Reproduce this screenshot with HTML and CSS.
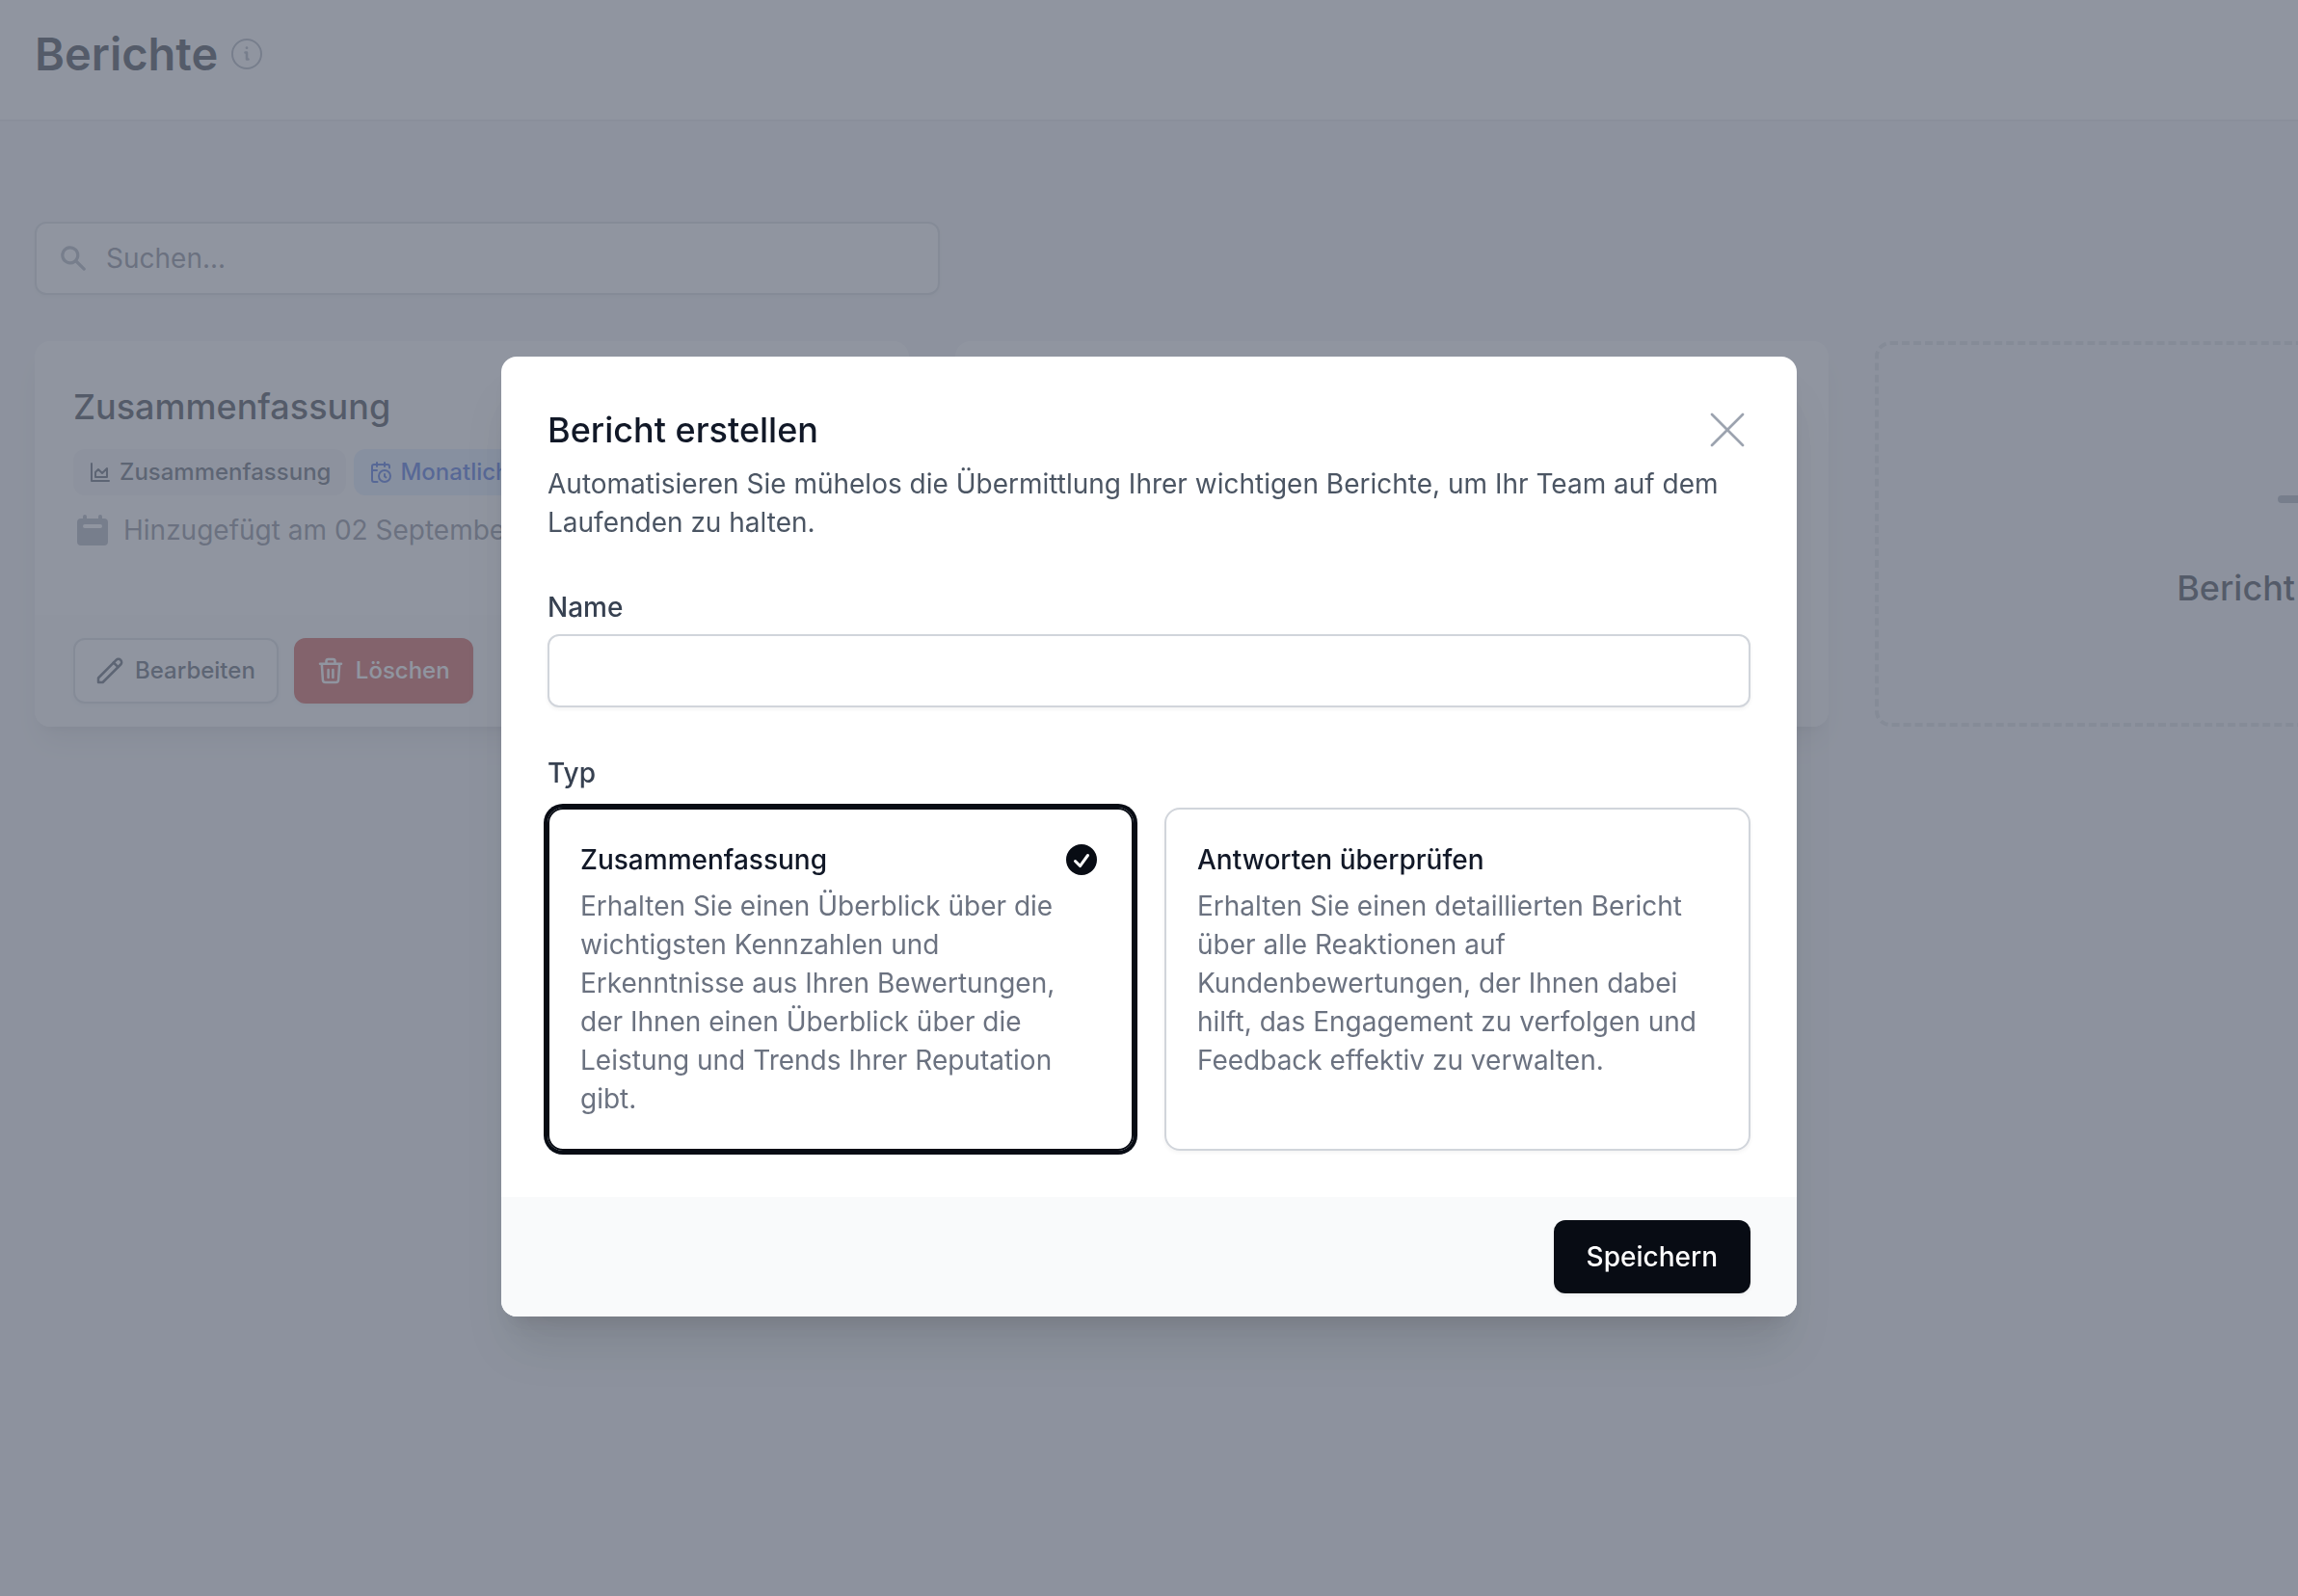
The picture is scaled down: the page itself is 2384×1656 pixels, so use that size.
FILE: index.html
```html
<!DOCTYPE html>
<html lang="de">
<head>
  <meta charset="UTF-8" />
  <meta name="viewport" content="width=device-width, initial-scale=1.0" />
  <title>Berichte</title>
  <link rel="stylesheet" href="styles.css">
</head>
<body>
  <header class="page-header">
    <h1>Berichte</h1>
    <svg class="info-icon" viewBox="0 0 32 32" fill="none" stroke="currentColor" stroke-width="2">
      <circle cx="16" cy="16" r="15" />
      <path d="M14.5 14.5H16v7h1.500" stroke-width="2.600" stroke-linecap="round" stroke-linejoin="round" />
      <circle cx="16" cy="9.700" r="1.400" fill="currentColor" stroke="none" />
    </svg>
  </header>

  <main class="content">
    <div class="search">
      <svg class="search-icon" viewBox="0 0 20 20" fill="currentColor">
        <path fill-rule="evenodd" clip-rule="evenodd" d="M8 4a4 4 0 100 8 4 4 0 000-8zM2 8a6 6 0 1110.89 3.476l4.817 4.817a1 1 0 01-1.414 1.414l-4.816-4.816A6 6 0 012 8z" />
      </svg>
      <input type="search" class="search-input" placeholder="Suchen..." aria-label="Suchen" />
    </div>

    <div class="report-grid">
      <article class="report-card">
        <div class="report-body">
          <h2>Zusammenfassung</h2>
          <div class="badges">
            <span class="badge">
              <svg class="badge-icon" viewBox="0 0 24 24">
                <path d="M3 3v18h18" />
                <path d="M7 12v5h12V8l-5 5-4-4Z" />
              </svg>
              Zusammenfassung
            </span>
            <span class="badge badge-blue">
              <svg class="badge-icon" viewBox="0 0 24 24">
                <path d="M21 7.5V6a2 2 0 0 0-2-2H5a2 2 0 0 0-2 2v14a2 2 0 0 0 2 2h3.5" />
                <path d="M16 2v4M8 2v4M3 10h5M17.5 17.5 16 16.3V14" />
                <circle cx="16" cy="16" r="6" />
              </svg>
              Monatlich
            </span>
          </div>
          <p class="report-date">
            <svg class="date-icon" viewBox="0 0 20 20" fill="currentColor">
              <path fill-rule="evenodd" clip-rule="evenodd" d="M6 2a1 1 0 00-1 1v1H4a2 2 0 00-2 2v10a2 2 0 002 2h12a2 2 0 002-2V6a2 2 0 00-2-2h-1V3a1 1 0 10-2 0v1H7V3a1 1 0 00-1-1zm0 5a1 1 0 000 2h8a1 1 0 100-2H6z" />
            </svg>
            Hinzugefügt am 02 September
          </p>
        </div>
        <div class="report-footer">
          <button type="button" class="btn btn-edit">
            <svg class="btn-icon" viewBox="0 0 28 28">
              <path d="M2 26v-4.500L20.500 2.800a3.300 3.300 0 0 1 4.700 4.700L6.600 26Z" />
              <path d="m17.800 5.500 4.700 4.700" />
            </svg>
            Bearbeiten
          </button>
          <button type="button" class="btn btn-delete">
            <svg class="btn-icon" viewBox="0 0 28 28">
              <path d="M3 6.700h22M4.800 6.700 5.900 23.500a2.600 2.600 0 0 0 2.600 2.500h11a2.600 2.600 0 0 0 2.600-2.500L23.200 6.700M9.500 6.700V4a2 2 0 0 1 2-2h5a2 2 0 0 1 2 2v2.700M11.600 13v8M16.400 13v8" />
            </svg>
            Löschen
          </button>
        </div>
      </article>

      <article class="report-card">
        <div class="report-body"></div>
        <div class="report-footer"></div>
      </article>

      <button type="button" class="new-report">
        <svg class="plus-icon" viewBox="0 0 24 24">
          <path d="M12 4v16m8-8H4" />
        </svg>
        Bericht erstellen
      </button>
    </div>
  </main>

  <!-- Modal -->
  <div class="overlay">
    <form class="modal" role="dialog" aria-modal="true" aria-labelledby="modal-title">
      <div class="modal-body">
        <div class="modal-head">
          <div class="modal-title-row">
            <h2 id="modal-title">Bericht erstellen</h2>
            <button type="button" class="close-btn" aria-label="Schließen">
              <svg viewBox="3 3 18 18">
                <path d="M6 18L18 6M6 6l12 12" />
              </svg>
            </button>
          </div>
          <p>Automatisieren Sie mühelos die Übermittlung Ihrer wichtigen Berichte, um Ihr Team auf dem Laufenden zu halten.</p>
        </div>

        <div class="field">
          <label class="field-label" for="report-name">Name</label>
          <input type="text" id="report-name" class="text-input" />
        </div>

        <fieldset class="field">
          <legend class="field-label">Typ</legend>
          <div class="type-options">
            <label class="type-option">
              <input type="radio" name="type" value="summary" checked />
              <span class="type-text">
                <span class="type-title">Zusammenfassung</span>
                <span class="type-desc">Erhalten Sie einen Überblick über die wichtigsten Kennzahlen und Erkenntnisse aus Ihren Bewertungen, der Ihnen einen Überblick über die Leistung und Trends Ihrer Reputation gibt.</span>
              </span>
              <svg class="check-icon" viewBox="0 0 20 20" fill="currentColor">
                <path fill-rule="evenodd" clip-rule="evenodd" d="M10 18a8 8 0 100-16 8 8 0 000 16zm3.857-9.809a.75.75 0 00-1.214-.882l-3.483 4.79-1.88-1.88a.75.75 0 10-1.06 1.061l2.5 2.5a.75.75 0 001.137-.089l4-5.5z" />
              </svg>
            </label>
            <label class="type-option">
              <input type="radio" name="type" value="responses" />
              <span class="type-text">
                <span class="type-title">Antworten überprüfen</span>
                <span class="type-desc">Erhalten Sie einen detaillierten Bericht über alle Reaktionen auf Kundenbewertungen, der Ihnen dabei hilft, das Engagement zu verfolgen und Feedback effektiv zu verwalten.</span>
              </span>
            </label>
          </div>
        </fieldset>
      </div>
      <div class="modal-footer">
        <button type="submit" class="save-btn">Speichern</button>
      </div>
    </form>
  </div>
</body>
</html>
```

FILE: styles.css
```css
* {
  box-sizing: border-box;
  margin: 0;
  padding: 0;
}
body {
  min-height: 100vh;
  overflow: hidden;
  background-color: #f3f4f6;
  color: #111827;
  font-family: Inter, "Liberation Sans", sans-serif;
  font-size: 28px;
  line-height: 40px;
}
button,
input {
  font: inherit;
}
button {
  cursor: pointer;
}
svg {
  display: block;
  flex-shrink: 0;
}

/* Header */
.page-header {
  display: flex;
  align-items: center;
  gap: 14px;
  padding: 24px 36px 36px;
  background-color: white;
  border-bottom: 2px solid #e5e7eb;
}
.page-header h1 {
  font-size: 47px;
  line-height: 64px;
  font-weight: 600;
}
.info-icon {
  width: 32px;
  height: 32px;
  color: #9ca3af;
}

/* Reports */
.content {
  min-width: 2888px;
  padding: 104px 36px 48px;
}
.search {
  position: relative;
  width: calc(100% / 3);
  margin-bottom: 48px;
}
.search-icon {
  position: absolute;
  top: 22px;
  left: 24px;
  width: 32px;
  height: 32px;
  color: #9ca3af;
}
.search-input {
  display: block;
  width: 100%;
  padding: 16px 24px 16px 72px;
  border: 2px solid #d1d5db;
  border-radius: 12px;
  background-color: white;
  box-shadow: 0 2px 4px rgba(0, 0, 0, 0.05);
}
.search-input::placeholder {
  color: #6b7280;
}
.report-grid {
  display: grid;
  grid-template-columns: repeat(3, 1fr);
  gap: 48px;
}
.report-card {
  display: flex;
  flex-direction: column;
  overflow: hidden;
  border-radius: 16px;
  background-color: white;
  box-shadow: 0 20px 30px -6px rgba(0, 0, 0, 0.1), 0 8px 12px -8px rgba(0, 0, 0, 0.1);
}
.report-body {
  flex: 1;
  padding: 40px 40px 68px;
}
.report-body h2 {
  font-size: 36px;
  line-height: 56px;
  font-weight: 500;
}
.badges {
  display: flex;
  gap: 8px;
  margin: 16px 0;
}
.badge {
  display: flex;
  align-items: center;
  gap: 8px;
  padding: 8px 16px;
  border-radius: 12px;
  background-color: #f3f4f6;
  color: #374151;
  font-size: 24px;
  line-height: 32px;
  font-weight: 500;
}
.badge-blue {
  background-color: #dbeafe;
  color: #1d4ed8;
}
.badge-icon,
.btn-icon,
.plus-icon,
.close-btn svg {
  fill: none;
  stroke: currentColor;
  stroke-width: 2;
  stroke-linecap: round;
  stroke-linejoin: round;
}
.badge-icon {
  width: 24px;
  height: 24px;
}
.report-date {
  display: flex;
  align-items: center;
  gap: 12px;
  color: #6b7280;
}
.date-icon {
  width: 40px;
  height: 40px;
  color: #9ca3af;
}
.report-footer {
  display: flex;
  gap: 16px;
  padding: 24px 40px;
  background-color: #f9fafb;
}
.btn {
  display: flex;
  align-items: center;
  gap: 12px;
  padding: 16px 22px;
  border: 2px solid #d1d5db;
  border-radius: 12px;
  font-size: 24px;
  line-height: 32px;
  font-weight: 500;
  box-shadow: 0 2px 4px rgba(0, 0, 0, 0.05);
}
.btn-icon {
  width: 28px;
  height: 28px;
  stroke-width: 2.5;
}
.btn-edit {
  background-color: white;
  color: #374151;
}
.btn-delete {
  border-color: #cb3a31;
  background-color: #cb3a31;
  color: white;
}
.new-report {
  display: flex;
  flex-direction: column;
  align-items: center;
  justify-content: center;
  gap: 16px;
  border: 4px dashed #d1d5db;
  border-radius: 16px;
  background: none;
  color: #111827;
  font-size: 36px;
  line-height: 56px;
  font-weight: 500;
}
.plus-icon {
  width: 96px;
  height: 96px;
  color: #9ca3af;
}

/* Modal */
.overlay {
  position: fixed;
  inset: 0;
  display: flex;
  align-items: flex-start;
  justify-content: center;
  padding: 370px 48px 48px;
  background-color: rgba(107, 114, 128, 0.75);
}
.modal {
  width: 100%;
  max-width: 1344px;
  overflow: hidden;
  border-radius: 16px;
  background-color: white;
  box-shadow: 0 40px 50px -10px rgba(0, 0, 0, 0.1), 0 16px 20px -12px rgba(0, 0, 0, 0.1);
}
.modal-body {
  display: flex;
  flex-direction: column;
  gap: 48px;
  padding: 48px;
}
.modal-title-row {
  display: flex;
  align-items: center;
  justify-content: space-between;
  margin-bottom: 8px;
}
.modal-title-row h2 {
  font-size: 36px;
  line-height: 56px;
  font-weight: 500;
}
.modal-head p {
  color: #4b5563;
}
.close-btn {
  border: none;
  background: none;
  color: #9ca3af;
}
.close-btn svg {
  width: 48px;
  height: 48px;
  stroke-width: 1;
}
.field {
  border: none;
}
.field-label {
  display: block;
  margin-bottom: 8px;
  color: #374151;
  font-weight: 500;
}
.text-input {
  display: block;
  width: 100%;
  padding: 16px 24px;
  border: 2px solid #d1d5db;
  border-radius: 12px;
  box-shadow: 0 2px 4px rgba(0, 0, 0, 0.05);
}
.type-options {
  display: grid;
  grid-template-columns: 1fr 1fr;
  gap: 32px;
  padding-top: 8px;
}
.type-option {
  display: flex;
  position: relative;
  padding: 32px;
  border: 2px solid #d1d5db;
  border-radius: 16px;
  box-shadow: 0 2px 4px rgba(0, 0, 0, 0.05);
  cursor: pointer;
}
.type-option:has(input:checked) {
  border-color: #080c14;
  box-shadow: 0 0 0 4px #080c14;
}
.type-option input {
  position: absolute;
  opacity: 0;
}
.type-text {
  flex: 1;
}
.type-title {
  display: block;
  margin-bottom: 8px;
  font-weight: 500;
}
.type-desc {
  display: block;
  color: #6b7280;
}
.check-icon {
  width: 40px;
  height: 40px;
  color: #080c14;
}
.modal-footer {
  display: flex;
  justify-content: flex-end;
  padding: 24px 48px;
  background-color: #f9fafb;
}
.save-btn {
  padding: 16px 32px;
  border: 2px solid #080c14;
  border-radius: 12px;
  background-color: #080c14;
  color: white;
  font-weight: 500;
  box-shadow: 0 2px 4px rgba(0, 0, 0, 0.05);
}
```
